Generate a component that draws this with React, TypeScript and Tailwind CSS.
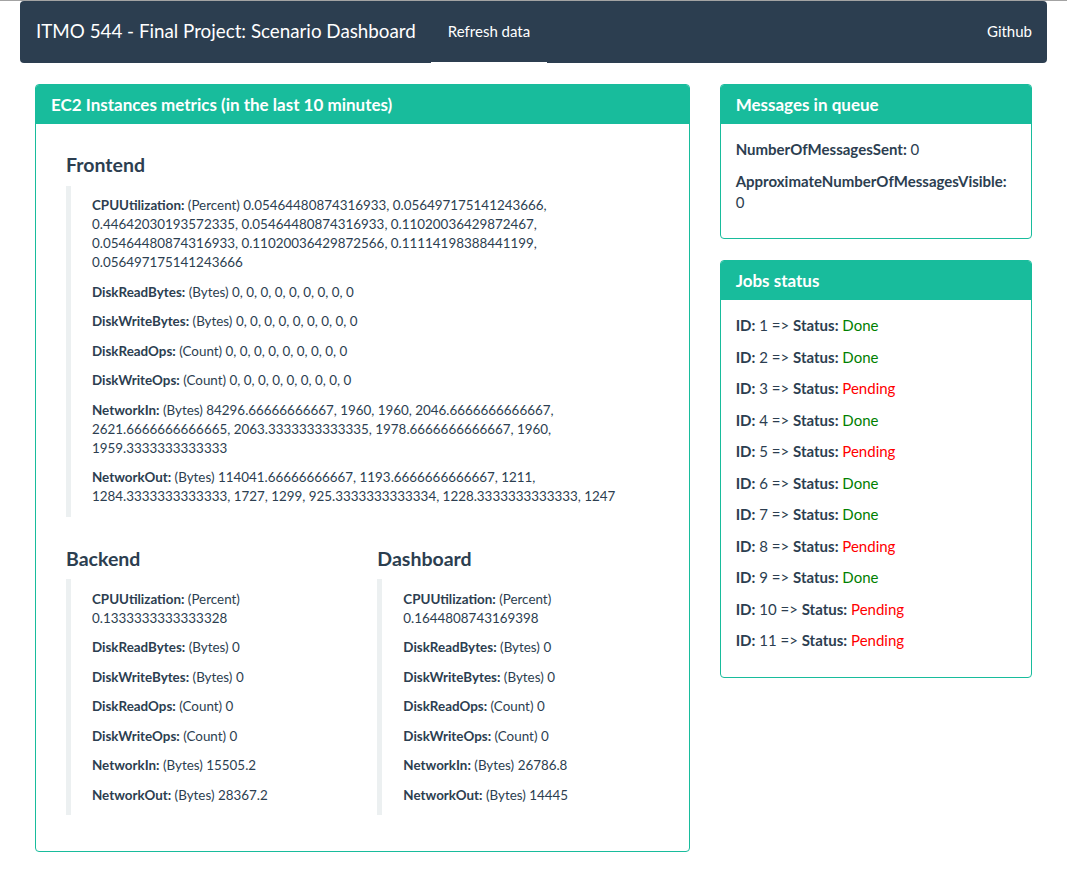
type Metric = { name: string; unit: string; value: string };

const frontend: Metric[] = [
  {
    name: "CPUUtilization",
    unit: "Percent",
    value:
      "0.05464480874316933, 0.056497175141243666, 0.44642030193572335, 0.05464480874316933, 0.11020036429872467, 0.05464480874316933, 0.11020036429872566, 0.11114198388441199, 0.056497175141243666",
  },
  { name: "DiskReadBytes", unit: "Bytes", value: "0, 0, 0, 0, 0, 0, 0, 0, 0" },
  { name: "DiskWriteBytes", unit: "Bytes", value: "0, 0, 0, 0, 0, 0, 0, 0, 0" },
  { name: "DiskReadOps", unit: "Count", value: "0, 0, 0, 0, 0, 0, 0, 0, 0" },
  { name: "DiskWriteOps", unit: "Count", value: "0, 0, 0, 0, 0, 0, 0, 0, 0" },
  {
    name: "NetworkIn",
    unit: "Bytes",
    value:
      "84296.66666666667, 1960, 1960, 2046.6666666666667, 2621.6666666666665, 2063.3333333333335, 1978.6666666666667, 1960, 1959.3333333333333",
  },
  {
    name: "NetworkOut",
    unit: "Bytes",
    value:
      "114041.66666666667, 1193.6666666666667, 1211, 1284.3333333333333, 1727, 1299, 925.3333333333334, 1228.3333333333333, 1247",
  },
];

const backend: Metric[] = [
  { name: "CPUUtilization", unit: "Percent", value: "0.1333333333333328" },
  { name: "DiskReadBytes", unit: "Bytes", value: "0" },
  { name: "DiskWriteBytes", unit: "Bytes", value: "0" },
  { name: "DiskReadOps", unit: "Count", value: "0" },
  { name: "DiskWriteOps", unit: "Count", value: "0" },
  { name: "NetworkIn", unit: "Bytes", value: "15505.2" },
  { name: "NetworkOut", unit: "Bytes", value: "28367.2" },
];

const dashboard: Metric[] = [
  { name: "CPUUtilization", unit: "Percent", value: "0.1644808743169398" },
  { name: "DiskReadBytes", unit: "Bytes", value: "0" },
  { name: "DiskWriteBytes", unit: "Bytes", value: "0" },
  { name: "DiskReadOps", unit: "Count", value: "0" },
  { name: "DiskWriteOps", unit: "Count", value: "0" },
  { name: "NetworkIn", unit: "Bytes", value: "26786.8" },
  { name: "NetworkOut", unit: "Bytes", value: "14445" },
];

const jobs = [
  { id: 1, status: "Done" },
  { id: 2, status: "Done" },
  { id: 3, status: "Pending" },
  { id: 4, status: "Done" },
  { id: 5, status: "Pending" },
  { id: 6, status: "Done" },
  { id: 7, status: "Done" },
  { id: 8, status: "Pending" },
  { id: 9, status: "Done" },
  { id: 10, status: "Pending" },
  { id: 11, status: "Pending" },
];

function Panel({ title, children }: { title: string; children: React.ReactNode }) {
  return (
    <section className="mb-[21px] overflow-hidden rounded-[4px] border border-[#18bc9c] bg-white">
      <div className="flex h-[39px] items-center bg-[#18bc9c] px-[15px] text-[17px] font-bold text-white">
        {title}
      </div>
      <div className="p-[15px]">{children}</div>
    </section>
  );
}

function MetricBlock({ title, metrics, top }: { title: string; metrics: Metric[]; top: string }) {
  return (
    <div>
      <h3 className={`${top} text-[19.5px] leading-[21px] font-bold`}>{title}</h3>
      <blockquote className="mt-[10.5px] mb-[21px] border-l-[5px] border-[#ecf0f1] px-[21px] py-[10.5px] text-[13.4px] leading-[19px]">
        {metrics.map((m, i) => (
          <p key={m.name} className={i === metrics.length - 1 ? "" : "mb-[10.5px]"}>
            <strong>{m.name}:</strong> ({m.unit}) {m.value}
          </p>
        ))}
      </blockquote>
    </div>
  );
}

export default function App() {
  return (
    <div className="min-h-screen bg-white font-['Lato',sans-serif] text-[15px] text-[#2c3e50]">
      <div className="h-px bg-[#a3a3a3]" />
      <div className="px-[20px]">
        <nav className="flex h-[62px] items-center rounded-[4px] bg-[#2c3e50] text-white">
          <span className="pb-px pl-[16px] text-[18.8px]">ITMO 544 - Final Project: Scenario Dashboard</span>
          <a className="relative ml-[15px] flex h-full items-center px-[17px] pb-px text-[15px]">
            Refresh data
            <span className="absolute right-0 bottom-0 left-0 h-px bg-white" />
          </a>
          <a className="ml-auto pr-[15px] pb-px text-[15px]">Github</a>
        </nav>

        <div className="mt-[21px] flex">
          <div className="w-2/3 px-[15px]">
            <Panel title="EC2 Instances metrics (in the last 10 minutes)">
              <div className="px-[15px]">
                <MetricBlock title="Frontend" metrics={frontend} top="mt-[15px]" />
              </div>
              <div className="grid grid-cols-2">
                <div className="px-[15px]">
                  <MetricBlock title="Backend" metrics={backend} top="mt-[10px]" />
                </div>
                <div className="px-[15px]">
                  <MetricBlock title="Dashboard" metrics={dashboard} top="mt-[10px]" />
                </div>
              </div>
            </Panel>
          </div>

          <div className="w-1/3 px-[15px]">
            <Panel title="Messages in queue">
              <p className="mb-[10.5px] leading-[21px]">
                <strong>NumberOfMessagesSent:</strong> 0
              </p>
              <p className="mb-[10.5px] leading-[21px]">
                <strong>ApproximateNumberOfMessagesVisible:</strong> 0
              </p>
            </Panel>
            <Panel title="Jobs status">
              {jobs.map((job) => (
                <p key={job.id} className="mb-[10.5px] leading-[21px]">
                  <strong>ID:</strong> {job.id} =&gt; <strong>Status:</strong>{" "}
                  <span className={job.status === "Done" ? "text-[#008000]" : "text-[#ff0000]"}>{job.status}</span>
                </p>
              ))}
            </Panel>
          </div>
        </div>
      </div>
    </div>
  );
}
